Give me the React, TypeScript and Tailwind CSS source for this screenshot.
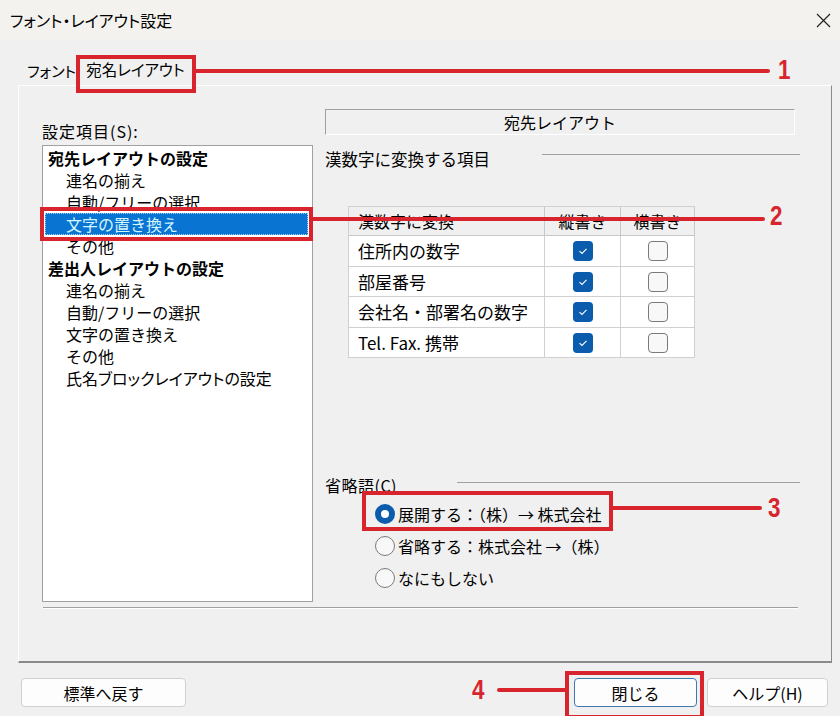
const jp = { fontFamily: '"Noto Sans CJK JP", "Noto Sans", sans-serif' };

const listItems = [
  { label: "宛先レイアウトの設定", head: true },
  { label: "連名の揃え" },
  { label: "自動/フリーの選択" },
  { label: "文字の置き換え", selected: true },
  { label: "その他" },
  { label: "差出人レイアウトの設定", head: true },
  { label: "連名の揃え" },
  { label: "自動/フリーの選択" },
  { label: "文字の置き換え" },
  { label: "その他" },
  { label: "氏名ブロックレイアウトの設定", narrow: true },
];

const rows = [
  { label: "住所内の数字", h: "h-[31px]" },
  { label: "部屋番号", h: "h-[30px]" },
  { label: "会社名・部署名の数字", h: "h-[31px]" },
  { label: "Tel. Fax. 携帯", h: "h-[30px]" },
];

function Checked() {
  return (
    <div className="flex h-[20px] w-[20px] items-center justify-center rounded-[4px] bg-[#0b5cad]">
      <svg width="12" height="12" viewBox="0 0 12 12">
        <polyline points="2.5,6.2 5,8.5 9.5,3.8" fill="none" stroke="#ffffff" strokeWidth="1.1" />
      </svg>
    </div>
  );
}

function Unchecked() {
  return <div className="h-[20px] w-[20px] rounded-[4px] border border-[#7a7a7a] bg-[#f8f8f8]" />;
}

function Radio({ on, label }: { on?: boolean; label: string }) {
  return (
    <div className="flex h-[32px] items-center">
      {on ? (
        <div className="flex h-[20px] w-[20px] items-center justify-center rounded-full bg-[#0b5cad]">
          <div className="h-[8px] w-[8px] rounded-full bg-white" />
        </div>
      ) : (
        <div className="h-[20px] w-[20px] rounded-full border border-[#7a7a7a] bg-[#f8f8f8]" />
      )}
      <span className="ml-[3px] text-[16px] leading-[20px] text-black">{label}</span>
    </div>
  );
}

function Num({ n, left, top }: { n: string; left: number; top: number }) {
  return (
    <div
      className="absolute origin-left scale-x-[0.8] text-[28px] font-bold leading-none text-[#d7242d]"
      style={{ left, top, fontFamily: '"Liberation Sans", Arial, sans-serif' }}
    >
      {n}
    </div>
  );
}

export default function App() {
  return (
    <div className="relative h-[716px] w-[840px] overflow-hidden bg-[#f0f0f0] text-black" style={jp}>
      {/* title bar */}
      <div className="flex h-[40px] items-center justify-between bg-[#f4f2ee] pl-[10px] pr-[9px]">
        <span className="text-[16px] [font-feature-settings:'palt']">フォント・レイアウト設定</span>
        <svg width="15" height="15" viewBox="0 0 15 15">
          <path d="M1 1 L14 14 M14 1 L1 14" stroke="#222" strokeWidth="1.2" />
        </svg>
      </div>

      {/* tabs */}
      <div className="flex h-[45px] items-end pl-[24px] [font-feature-settings:'palt']">
        <div className="flex h-[28px] items-center px-[3px] text-[15px]">フォント</div>
        <div className="flex h-[30px] items-center px-[7px] text-[15.5px]">宛名レイアウト</div>
      </div>

      {/* tab panel */}
      <div className="ml-[18px] flex h-[578px] w-[814px] flex-col border-b-2 border-l border-r border-t border-b-[#8a8a8a] border-l-[#ffffff] border-r-[#8a8a8a] border-t-[#ffffff] pl-[23px] pt-[23px]">
        <div className="flex">
          {/* left column */}
          <div className="w-[271px]">
            <div className="mb-[3px] mt-[11px] h-[22px] text-[16px] leading-[22px] tracking-[1px]">設定項目(S):</div>
            <div className="h-[457px] border border-[#a0a0a0] bg-white pt-[1px]">
              {listItems.map((it, i) =>
                it.selected ? (
                  <div
                    key={i}
                    className="ml-[2px] mr-[4px] h-[22px] border border-dotted border-[#a9d3f5] bg-[#0a74d3] pl-[20px] text-[16px] leading-[20px] text-[#d4f6ff]"
                  >
                    {it.label}
                  </div>
                ) : (
                  <div
                    key={i}
                    className={
                      it.head
                        ? "h-[22px] pl-[5px] text-[16px] font-bold leading-[22px]"
                        : it.narrow
                          ? "h-[22px] pl-[23px] text-[16px] leading-[22px] [font-feature-settings:'palt']"
                          : "h-[22px] pl-[23px] text-[16px] leading-[22px]"
                    }
                  >
                    {it.label}
                  </div>
                )
              )}
            </div>
          </div>

          {/* right column */}
          <div className="ml-[12px] flex w-[475px] flex-col">
            <div className="flex h-[26px] w-[470px] items-center justify-center border-b border-l border-r border-t border-b-white border-l-[#a0a0a0] border-r-white border-t-[#a0a0a0] text-[16px]">
              宛先レイアウト
            </div>

            <div className="mt-[13px] flex h-[22px] items-start">
              <span className="text-[16.5px] leading-[22px]">漢数字に変換する項目</span>
              <div className="ml-[52px] mt-[6px] flex-1 border-t border-[#a0a0a0]" />
            </div>

            <div className="ml-[23px] mt-[36px] w-[347px] border-l border-t border-[#d0d0d0]">
              <div className="grid h-[29px] grid-cols-[196px_76px_74px] bg-[#f0f0f0] text-[16px]">
                <div className="flex items-center border-b border-r border-[#c8c8c8] pl-[9px]">漢数字に変換</div>
                <div className="flex items-center justify-center border-b border-r border-[#c8c8c8]">縦書き</div>
                <div className="flex items-center justify-center border-b border-r border-[#c8c8c8]">横書き</div>
              </div>
              {rows.map((r) => (
                <div key={r.label} className={"grid grid-cols-[196px_76px_74px] bg-white text-[17px] " + r.h}>
                  <div className="flex items-center border-b border-r border-[#d0d0d0] pl-[9px]">{r.label}</div>
                  <div className="flex items-center justify-center border-b border-r border-[#d0d0d0]">
                    <Checked />
                  </div>
                  <div className="flex items-center justify-center border-b border-r border-[#d0d0d0]">
                    <Unchecked />
                  </div>
                </div>
              ))}
            </div>

            <div className="mt-[116px] flex h-[22px] items-start">
              <span className="text-[16px] leading-[22px] tracking-[0.5px]">省略語(C)</span>
              <div className="ml-[60px] mt-[8px] flex-1 border-t border-[#a0a0a0]" />
            </div>

            <div className="mt-[2px] flex flex-col pl-[50px]">
              <Radio on label="展開する：（株）→ 株式会社" />
              <Radio label="省略する：株式会社 →（株）" />
              <Radio label="なにもしない" />
            </div>
          </div>
        </div>

        <div className="ml-[1px] mt-[5px] h-[2px] w-[755px] border-b border-t border-b-white border-t-[#a0a0a0]" />
      </div>

      {/* bottom buttons */}
      <div className="mt-[15px] flex pl-[21px] pr-[12px]">
        <button className="h-[29px] w-[165px] rounded-[4px] border border-[#d0d0d0] bg-[#fdfdfd] text-[16px]">
          標準へ戻す
        </button>
        <div className="ml-auto flex gap-[10px]">
          <button className="h-[29px] w-[123px] rounded-[4px] border border-[#3f78b0] bg-[#fdfdfd] text-[16px]">
            閉じる
          </button>
          <button className="h-[29px] w-[121px] rounded-[4px] border border-[#d0d0d0] bg-[#fdfdfd] text-[16px]">
            ヘルプ(H)
          </button>
        </div>
      </div>

      {/* annotations */}
      <div className="absolute left-[76px] top-[55px] h-[38px] w-[120px] border-[4px] border-[#d7242d]" />
      <div className="absolute left-[194px] top-[69px] h-[4px] w-[576px] rounded-full bg-[#d7242d]" />
      <Num n="1" left={778} top={56} />

      <div className="absolute left-[40px] top-[207px] h-[34px] w-[273px] border-[4px] border-[#d7242d]" />
      <div className="absolute left-[311px] top-[217px] h-[4px] w-[454px] rounded-full bg-[#d7242d]" />
      <Num n="2" left={770} top={202} />

      <div className="absolute left-[362px] top-[491px] h-[40px] w-[251px] border-[4px] border-[#d7242d]" />
      <div className="absolute left-[611px] top-[506px] h-[4px] w-[151px] rounded-full bg-[#d7242d]" />
      <Num n="3" left={768} top={494} />

      <div className="absolute left-[565px] top-[671px] h-[48px] w-[139px] border-[4px] border-[#d7242d]" />
      <div className="absolute left-[497px] top-[688px] h-[4px] w-[70px] rounded-full bg-[#d7242d]" />
      <Num n="4" left={472} top={676} />
    </div>
  );
}
